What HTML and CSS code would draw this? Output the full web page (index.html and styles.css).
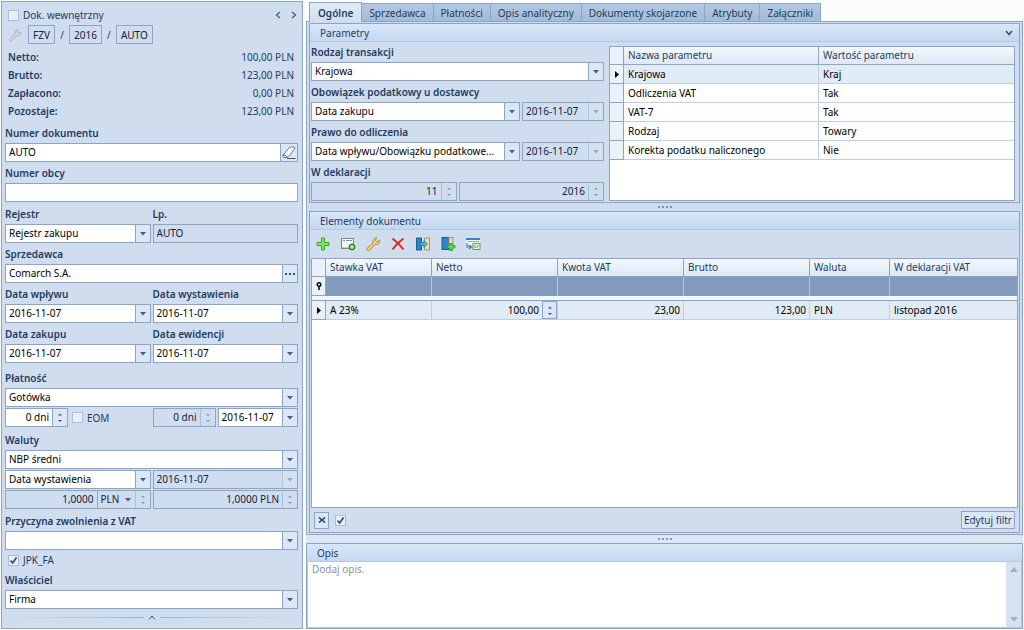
FILE: index.html
```
<!DOCTYPE html>
<html lang="pl">
<head>
<meta charset="utf-8">
<title>Faktura zakupu</title>
<link rel="stylesheet" href="styles.css">
</head>
<body>
<svg class="defs" aria-hidden="true">
  <symbol id="spin" viewBox="0 0 14 17"><path d="M5 6.5L7 4.5L9 6.5ZM5 11L7 13L9 11Z" fill="currentColor"/></symbol>
  <symbol id="wrench" viewBox="0 0 16 16"><path d="M2 12.5L8 7C7.400 4.500 8.500 2.500 11.500 1.500L10.500 4.500L12 6L14.800 4.500C14.500 7.500 12.500 9 10 8.500L4.500 14.500C3 15.500 1 14 2 12.500Z" fill="var(--fill)" stroke="var(--line)" stroke-width="1"/></symbol>
</svg>
<main class="app">
  <aside class="side">
    <header class="top">
      <label class="check"><input type="checkbox"> Dok. wewnętrzny</label>
      <nav class="pager">
        <button type="button" aria-label="Poprzedni"><svg width="6" height="8" viewBox="0 0 6 8"><path d="M5 1L1.500 4L5 7" fill="none" stroke="#44617f" stroke-width="1.300"/></svg></button>
        <button type="button" aria-label="Następny"><svg width="6" height="8" viewBox="0 0 6 8"><path d="M1 1L4.500 4L1 7" fill="none" stroke="#44617f" stroke-width="1.300"/></svg></button>
      </nav>
    </header>
    <div class="number">
      <svg class="wrench-off" width="14" height="14"><use href="#wrench"/></svg>
      <button type="button">FZV</button><span>/</span><button type="button">2016</button><span>/</span><button type="button">AUTO</button>
    </div>
    <dl class="totals">
      <div><dt>Netto:</dt><dd>100,00 PLN</dd></div>
      <div><dt>Brutto:</dt><dd>123,00 PLN</dd></div>
      <div><dt>Zapłacono:</dt><dd>0,00 PLN</dd></div>
      <div><dt>Pozostaje:</dt><dd>123,00 PLN</dd></div>
    </dl>

    <label class="cap" for="nr">Numer dokumentu</label>
    <div class="field"><input id="nr" value="AUTO"><button class="btn" type="button" aria-label="Wyczyść"><svg width="14" height="13" viewBox="0 0 14 13"><path d="M1 9L7 2Q8 1 9.500 1H12Q13.500 1.500 12.500 3L6.500 10.500Q5.500 11.500 4 11.500H2Q0 11 1 9Z" fill="#fff" stroke="#62799a"/><path d="M1 9Q3 8.500 5.500 11M5 12.500H13.500" fill="none" stroke="#34527c"/></svg></button></div>
    <label class="cap" for="obcy">Numer obcy</label>
    <div class="field"><input id="obcy"></div>

    <div class="pair section">
      <div><label class="cap" for="rej">Rejestr</label><div class="field drop"><select id="rej"><option>Rejestr zakupu</option></select></div></div>
      <div><label class="cap" for="lp">Lp.</label><div class="field off"><input id="lp" value="AUTO" readonly></div></div>
    </div>
    <label class="cap" for="sprz">Sprzedawca</label>
    <div class="field"><input id="sprz" value="Comarch S.A."><button class="btn narrow" type="button" aria-label="Wybierz"><svg width="10" height="2" viewBox="0 0 10 2"><path d="M0 0H2V2H0ZM4 0H6V2H4ZM8 0H10V2H8Z" fill="#34527c"/></svg></button></div>
    <div class="pair">
      <div><label class="cap" for="d1">Data wpływu</label><div class="field drop"><select id="d1"><option>2016-11-07</option></select></div></div>
      <div><label class="cap" for="d2">Data wystawienia</label><div class="field drop"><select id="d2"><option>2016-11-07</option></select></div></div>
      <div><label class="cap" for="d3">Data zakupu</label><div class="field drop"><select id="d3"><option>2016-11-07</option></select></div></div>
      <div><label class="cap" for="d4">Data ewidencji</label><div class="field drop"><select id="d4"><option>2016-11-07</option></select></div></div>
    </div>

    <div class="section wide">
      <label class="cap" for="pl">Płatność</label>
      <div class="field drop"><select id="pl"><option>Gotówka</option></select></div>
      <div class="pair">
        <div class="line">
          <div class="field days"><input class="num" aria-label="Dni" value="0 dni"><button class="btn narrow" type="button" aria-label="Zmień"><svg><use href="#spin"/></svg></button></div>
          <label class="check eom"><input type="checkbox"> EOM</label>
        </div>
        <div class="line">
          <div class="field off days"><input class="num" aria-label="Termin" value="0 dni" readonly><button class="btn narrow" type="button" aria-label="Zmień termin"><svg><use href="#spin"/></svg></button></div>
          <div class="field drop grow"><select aria-label="Data płatności"><option>2016-11-07</option></select></div>
        </div>
      </div>
    </div>

    <div class="section">
      <label class="cap" for="wal">Waluty</label>
      <div class="field drop"><select id="wal"><option>NBP średni</option></select></div>
      <div class="pair">
        <div class="field drop"><select aria-label="Data kursu"><option>Data wystawienia</option></select></div>
        <div class="field drop off"><select aria-label="Dzień kursu"><option>2016-11-07</option></select></div>
        <div class="field off"><input class="num" aria-label="Kurs" value="1,0000" readonly>
          <select class="unit" aria-label="Waluta"><option>PLN</option></select><button class="btn narrow" type="button" aria-label="Zmień kurs"><svg><use href="#spin"/></svg></button></div>
        <div class="field off"><input class="num" aria-label="Wartość kursu" value="1,0000 PLN" readonly><button class="btn narrow" type="button" aria-label="Zmień wartość"><svg><use href="#spin"/></svg></button></div>
      </div>
    </div>

    <div class="exempt">
      <label class="cap" for="zw">Przyczyna zwolnienia z VAT</label>
      <div class="field drop"><select id="zw"><option></option></select></div>
    </div>
    <label class="check jpk"><input type="checkbox" checked> JPK_FA</label>
    <label class="cap" for="wl">Właściciel</label>
    <div class="field drop"><select id="wl"><option>Firma</option></select></div>
    <div class="fold"><button type="button" aria-label="Zwiń"><svg width="8" height="5" viewBox="0 0 8 5"><path d="M1 4.500L4 1L7 4.500" fill="none" stroke="#34527c"/></svg></button></div>
  </aside>

  <section class="work">
    <nav class="tabs">
      <button class="on" type="button">Ogólne</button><button type="button">Sprzedawca</button><button type="button">Płatności</button><button type="button">Opis analityczny</button><button type="button">Dokumenty skojarzone</button><button type="button">Atrybuty</button><button type="button">Załączniki</button>
    </nav>
    <div class="page">
      <section class="panel">
        <h2>Parametry <svg width="8" height="6" viewBox="0 0 8 6"><path d="M1 1L4 4.500L7 1" fill="none" stroke="#34527c" stroke-width="1.600"/></svg></h2>
        <div class="params">
          <div class="form">
            <label class="cap" for="rt">Rodzaj transakcji</label>
            <div class="field drop"><select id="rt"><option>Krajowa</option></select></div>
            <label class="cap" for="op">Obowiązek podatkowy u dostawcy</label>
            <div class="line">
              <div class="field drop grow"><select id="op"><option>Data zakupu</option></select></div>
              <div class="field drop off date"><select aria-label="Dzień obowiązku"><option>2016-11-07</option></select></div>
            </div>
            <label class="cap" for="po">Prawo do odliczenia</label>
            <div class="line">
              <div class="field drop grow"><select id="po"><option>Data wpływu/Obowiązku podatkowe...</option></select></div>
              <div class="field drop off date"><select aria-label="Dzień odliczenia"><option>2016-11-07</option></select></div>
            </div>
            <label class="cap" for="wd">W deklaracji</label>
            <div class="pair">
              <div class="field off"><input id="wd" class="num" value="11" readonly><button class="btn narrow" type="button" aria-label="Zmień miesiąc"><svg><use href="#spin"/></svg></button></div>
              <div class="field off"><input class="num" aria-label="Rok" value="2016" readonly><button class="btn narrow" type="button" aria-label="Zmień rok"><svg><use href="#spin"/></svg></button></div>
            </div>
          </div>
          <div class="list">
            <table class="grid">
              <colgroup><col class="mark"><col><col></colgroup>
              <thead><tr><th></th><th>Nazwa parametru</th><th>Wartość parametru</th></tr></thead>
              <tbody>
                <tr class="sel"><th><svg width="4" height="7" viewBox="0 0 4 7"><path d="M0 0L4 3.500L0 7Z"/></svg></th><td>Krajowa</td><td>Kraj</td></tr>
                <tr><th></th><td>Odliczenia VAT</td><td>Tak</td></tr>
                <tr><th></th><td>VAT-7</td><td>Tak</td></tr>
                <tr><th></th><td>Rodzaj</td><td>Towary</td></tr>
                <tr><th></th><td>Korekta podatku naliczonego</td><td>Nie</td></tr>
              </tbody>
            </table>
          </div>
        </div>
      </section>
      <div class="split"></div>
      <section class="panel items">
        <h2>Elementy dokumentu</h2>
        <div class="tools">
          <button type="button" aria-label="Dodaj"><svg viewBox="0 0 16 16"><path d="M6.500 2H9.500V6.500H14V9.500H9.500V14H6.500V9.500H2V6.500H6.500Z" fill="#7fe65c" stroke="#3aa535"/></svg></button>
          <button type="button" aria-label="Dodaj w formularzu"><svg viewBox="0 0 16 16"><rect x="1.500" y="2.500" width="12" height="10" fill="#f8fafc" stroke="#6e88a8"/><path d="M3 4.500H5M6 4.500H12" stroke="#7892b2"/><path d="M2 11.500H9" stroke="#d4d08c"/><circle cx="12" cy="11" r="3" fill="#46ae38" stroke="#267e25"/><path d="M12 9V13M10 11H14" stroke="#dff7cf"/></svg></button>
          <button type="button" class="wrench-on" aria-label="Edytuj"><svg><use href="#wrench"/></svg></button>
          <button type="button" aria-label="Usuń"><svg viewBox="0 0 16 16"><path d="M2.500 2.500Q8 6.500 13.500 13.500M13.500 2.500Q7 7 2.500 13.500" fill="none" stroke="#dc2a20" stroke-width="2"/></svg></button>
          <button type="button" aria-label="Księguj"><svg viewBox="0 0 16 16"><path d="M1.500 2H6.500V14H1.500Z" fill="#2b88c0" stroke="#1b5d90"/><path d="M9.500 2H14.500V14H9.500Z" fill="#f0ddb0" stroke="#a89568"/><path d="M5 6.500H9V4.500L12.500 8L9 11.500V9.500H5Z" fill="#55aee0" stroke="#286f9e" stroke-width=".7"/></svg></button>
          <button type="button" aria-label="Dodaj zapis"><svg viewBox="0 0 16 16"><rect x="2" y="1.500" width="7" height="12" fill="#2b88c0" stroke="#1b5d90"/><rect x="9" y="1.500" width="4" height="8" fill="#f0ddb0" stroke="#a89568"/><path d="M9.500 7.500H12.500V9.500H15V12H12.500V14.500H9.500V12H7.500V9.500H9.500Z" fill="#5cd63e" stroke="#2a9128" stroke-width=".7"/></svg></button>
          <button type="button" aria-label="Przelicz"><svg viewBox="0 0 16 16"><path d="M1 3H15V9H1Z" fill="#f5f9fc"/><path d="M1 3H15" stroke="#3c82b8" stroke-width="2"/><path d="M2 5.500H14" stroke="#9cb98a"/><path d="M2 7V11H6M4 9L6.500 11L4 13" fill="none" stroke="#347fb9" stroke-width="1.200"/><rect x="8" y="7.500" width="7" height="6" fill="#eef4df" stroke="#719a61"/><path d="M10 9V12M11.500 12L13.500 9" stroke="#719a61"/></svg></button>
        </div>
        <div class="scroll">
          <table class="grid main">
            <colgroup><col class="mark"><col class="c1"><col class="c2"><col class="c2"><col class="c2"><col class="c3"><col></colgroup>
            <thead>
              <tr><th></th><th>Stawka VAT</th><th>Netto</th><th>Kwota VAT</th><th>Brutto</th><th>Waluta</th><th>W deklaracji VAT</th></tr>
              <tr class="filter"><th><svg width="6" height="8" viewBox="0 0 6 8"><circle cx="3" cy="2.500" r="1.800" fill="none" stroke="#000" stroke-width="1.400"/><path d="M3 4V8" stroke="#000" stroke-width="1.500"/></svg></th><td></td><td></td><td></td><td></td><td></td><td></td></tr>
            </thead>
            <tbody>
              <tr class="gap"><td colspan="7"></td></tr>
              <tr class="sel"><th><svg width="4" height="7" viewBox="0 0 4 7"><path d="M0 0L4 3.500L0 7Z"/></svg></th><td>A 23%</td><td class="edit"><div><span>100,00</span><button class="btn boxed" type="button" aria-label="Zmień netto"><svg><use href="#spin"/></svg></button></div></td><td class="r">23,00</td><td class="r">123,00</td><td>PLN</td><td>listopad 2016</td></tr>
            </tbody>
          </table>
        </div>
        <footer class="foot">
          <button class="clear" type="button" aria-label="Usuń filtr"><svg width="8" height="6" viewBox="0 0 8 6"><path d="M1 .5L7 5.500M7 .5L1 5.500" stroke="#243f63" stroke-width="1.500"/></svg></button>
          <input type="checkbox" checked aria-label="Filtr aktywny">
          <button class="filt" type="button">Edytuj filtr</button>
        </footer>
      </section>
    </div>
    <div class="split outer"></div>
    <section class="note">
      <h2><label for="opis">Opis</label></h2>
      <div class="area">
        <textarea id="opis" placeholder="Dodaj opis."></textarea>
        <div class="bar"><svg width="8" height="5" viewBox="0 0 8 5"><path d="M0 5L4 0L8 5Z" fill="#9fb0c6"/></svg><svg width="8" height="5" viewBox="0 0 8 5"><path d="M0 0L4 5L8 0Z" fill="#9fb0c6"/></svg></div>
      </div>
    </section>
  </section>
</main>
</body>
</html>
```

FILE: styles.css
```
:root {
  --bg: #cfddee;
  --edge: #8ba5c5;
  --soft: #a9c0dc;
  --ink: #1f3c60;
}
* { box-sizing: border-box; }
body {
  margin: 0;
  background: #fafcfe;
  color: var(--ink);
  font: 10px/18px "Noto Sans", "Open Sans", sans-serif;
}
button, input, select, textarea { font: inherit; color: inherit; margin: 0; border-radius: 0; }
button { background: none; border: 0; padding: 0; }
svg { display: block; flex: none; }
.defs { display: none; }
h2 { margin: 0; font: inherit; }

.app { display: flex; gap: 3px; min-height: 100vh; padding: 1px; }

/* document summary column */
.side {
  flex: 0 0 302px;
  padding: 4px 4px 0 3px;
  background: var(--bg);
  border: 1px solid var(--edge);
}
.top { display: flex; justify-content: space-between; padding: 0 0 0 3px; height: 18px; }
.pager { display: flex; gap: 10px; padding-right: 1px; }
.check { display: flex; align-items: center; gap: 4px; height: 18px; }
input[type="checkbox"] {
  appearance: none;
  width: 11px;
  height: 11px;
  border: 1px solid #b0bfd0;
  background: #e6eef6;
  flex: none;
}
input[type="checkbox"]:checked {
  background: #e6eef6 url("data:image/svg+xml,%3Csvg xmlns='http://www.w3.org/2000/svg' viewBox='0 0 9 9'%3E%3Cpath d='M1.500 4.500L3.700 7L7.500 1.500' fill='none' stroke='%232c4567' stroke-width='1.600'/%3E%3C/svg%3E") center / 9px 9px no-repeat;
}
.number { display: flex; align-items: center; padding: 1px 0 2px 3px; }
.number button { border: 1px solid var(--edge); height: 19px; line-height: 16px; padding: 0 4px; color: #10233c; }
.number span { width: 14px; text-align: center; }
.number svg { margin-right: 6px; }
.number button { min-width: 27px; }
.wrench-off { --fill: #d3d8dc; --line: #a4afbb; }
.wrench-on { --fill: #f7d272; --line: #b88632; }
.totals { margin: 2px 0 3px; padding: 0 4px 0 3px; }
.totals div { display: flex; justify-content: space-between; }
.totals dt { font-weight: 600; }
.totals dd { margin: 0; }

.cap { display: block; height: 20px; line-height: 20px; font-weight: 600; white-space: nowrap; }
.pair { display: grid; grid-template-columns: minmax(0, 1fr) minmax(0, 1fr); column-gap: 2px; }
.section { margin-top: 2px; }
.section.wide { margin-top: 4px; }
.exempt { margin-top: 1px; }
.line { display: flex; gap: 2px; }
.grow { flex: 1; min-width: 0; }

.field {
  display: flex;
  height: 19px;
  margin-bottom: 1px;
  border: 1px solid var(--edge);
  background: #fff;
  color: #000;
}
.field input, .field select {
  appearance: none;
  flex: 1;
  min-width: 0;
  width: 0;
  padding: 0 3px;
  border: 0;
  background: none;
  line-height: 17px;
  outline: 0;
}
.off { background: var(--bg); color: #10233c; }
.num { text-align: right; }
.drop { display: grid; grid-template-columns: minmax(0, 1fr) 15px; }
.drop select { grid-area: 1 / 1 / 2 / 3; width: 100%; }
.drop::after {
  content: "";
  grid-area: 1 / 2;
  pointer-events: none;
  border-left: 1px solid var(--edge);
  background: url("data:image/svg+xml,%3Csvg xmlns='http://www.w3.org/2000/svg' viewBox='0 0 6 4'%3E%3Cpath d='M0 0H6L3 3.500Z' fill='%2344607f'/%3E%3C/svg%3E") center / 6px 4px no-repeat, #dbe7f5;
}
.drop.off::after { opacity: .4; }
.btn {
  width: 17px;
  display: grid;
  place-items: center;
  border-left: 1px solid var(--edge);
  background: #dbe7f5;
  color: #34527c;
}
.btn.narrow { width: 15px; }
.btn svg:has(use) { width: 14px; height: 17px; }
.off .btn { background: none; color: #8197b2; border-color: var(--soft); }
.days { width: 63px; }
.eom { height: 19px; padding-left: 2px; }
.field .unit {
  flex: 0 0 38px;
  border-left: 1px solid var(--edge);
  background: url("data:image/svg+xml,%3Csvg xmlns='http://www.w3.org/2000/svg' viewBox='0 0 6 4'%3E%3Cpath d='M0 0H6L3 3.500Z' fill='%2344607f'/%3E%3C/svg%3E") right 4px center / 6px 4px no-repeat;
}
.jpk { padding-left: 3px; margin-bottom: 1px; }
.fold { display: flex; align-items: center; gap: 4px; height: 14px; padding: 0 4px; }
.fold::before, .fold::after { content: ""; flex: 1; height: 1px; background: linear-gradient(90deg, #cfddee, #9db3cf); }
.fold::after { background: linear-gradient(270deg, #cfddee, #9db3cf); }

/* tabs and panels */
.work { flex: 1; min-width: 0; display: flex; flex-direction: column; }
.tabs { display: flex; align-items: flex-end; height: 20px; padding-left: 3px; }
.tabs button {
  height: 18px;
  padding: 0 7px;
  line-height: 18px;
  background: linear-gradient(#b3c9e2, #a3bbd8);
  border: 1px solid var(--edge);
  border-width: 1px 1px 0 0;
  white-space: nowrap;
}
.tabs .on { height: 20px; margin-bottom: -1px; padding: 0 8px; background: linear-gradient(#e1ecf8, #cfddee); border-left-width: 1px; font-weight: 600; position: relative; }
.page { flex: 1; display: flex; flex-direction: column; padding: 1px 2px; background: var(--bg); border: 1px solid var(--edge); }
.panel { border: 1px solid var(--edge); }
.panel h2, .note h2 {
  display: flex;
  align-items: center;
  justify-content: space-between;
  height: 18px;
  padding: 0 6px 0 10px;
  background: linear-gradient(#d8e7f8, #c3d8f0);
  border-bottom: 1px solid #b4cae4;
}
.params { display: flex; gap: 5px; padding: 0 4px 0 1px; }
.form { flex: 0 0 293px; }
.date { width: 82px; }
.list { flex: 1; margin: 4px 0 1px; background: #fff; border: 1px solid var(--edge); }

.grid { width: 100%; table-layout: fixed; border-collapse: separate; border-spacing: 0; color: #000; }
.grid .mark { width: 14px; }
.grid th, .grid td {
  height: 19px;
  padding: 0 4px;
  font-weight: 400;
  line-height: 18px;
  text-align: left;
  white-space: nowrap;
  border: 0 solid #bdd0e6;
  border-width: 0 1px 1px 0;
}
.grid tr > :last-child { border-right: 0; }
.grid thead th { height: 18px; line-height: 17px; color: var(--ink); background: linear-gradient(#f3f8fd, #dce8f5); border-color: var(--edge); }
.grid tr > th:first-child { padding: 0; background: #eaf1f9; border-color: var(--edge); }
.grid th svg { margin: 0 auto; }
.sel td { background: #e1ebf6; }
.grid .r { text-align: right; padding-right: 3px; }

.split { height: 8px; display: grid; place-items: center; }
.split::after { content: ""; width: 14px; height: 2px; background: repeating-linear-gradient(90deg, #7f98b8 0 2px, transparent 2px 4px); }
.items { flex: 1; display: flex; flex-direction: column; }
.tools { display: flex; gap: 9px; height: 28px; align-items: center; padding-left: 5px; }
.tools svg { width: 16px; height: 16px; }
.scroll { flex: 1; margin: 0 1px; background: #fff; border: 1px solid var(--edge); }
.main .c1 { width: 106px; }
.main .c2 { width: 126px; }
.main .c3 { width: 80px; }
.grid .filter td { background: #829bbd; border-color: #b5c7de; border-bottom: 0; }
.grid .gap td { height: 5px; padding: 0; border-color: var(--edge); background: #f2f7fc; line-height: 0; }
.grid .edit { padding: 0; }
.edit div { display: flex; justify-content: flex-end; align-items: center; gap: 3px; }
.btn.boxed { width: 15px; height: 18px; border: 1px solid var(--edge); }
.foot { display: flex; align-items: center; gap: 6px; height: 24px; padding: 0 4px; }
.clear { width: 15px; height: 17px; display: grid; place-items: center; border: 1px solid var(--edge); background: #dbe7f5; }
.filt { margin-left: auto; height: 18px; padding: 0 2px; line-height: 16px; border: 1px solid var(--edge); background: #d9e6f5; }

.outer { background: #dce7f3; height: 8px; }
.note { display: flex; flex-direction: column; height: 86px; border: 1px solid var(--edge); background: #b5c8dd; }
.area { flex: 1; display: flex; margin: 0 1px 1px; background: #fff; }
textarea { flex: 1; min-height: 0; height: auto; resize: none; border: 0; padding: 0 4px; background: none; outline: 0; line-height: 15px; }
textarea::placeholder { color: #8793a3; opacity: 1; }
.bar { width: 15px; display: flex; flex-direction: column; align-items: center; justify-content: space-between; padding: 5px 0; background: #d5e2f0; }
```
